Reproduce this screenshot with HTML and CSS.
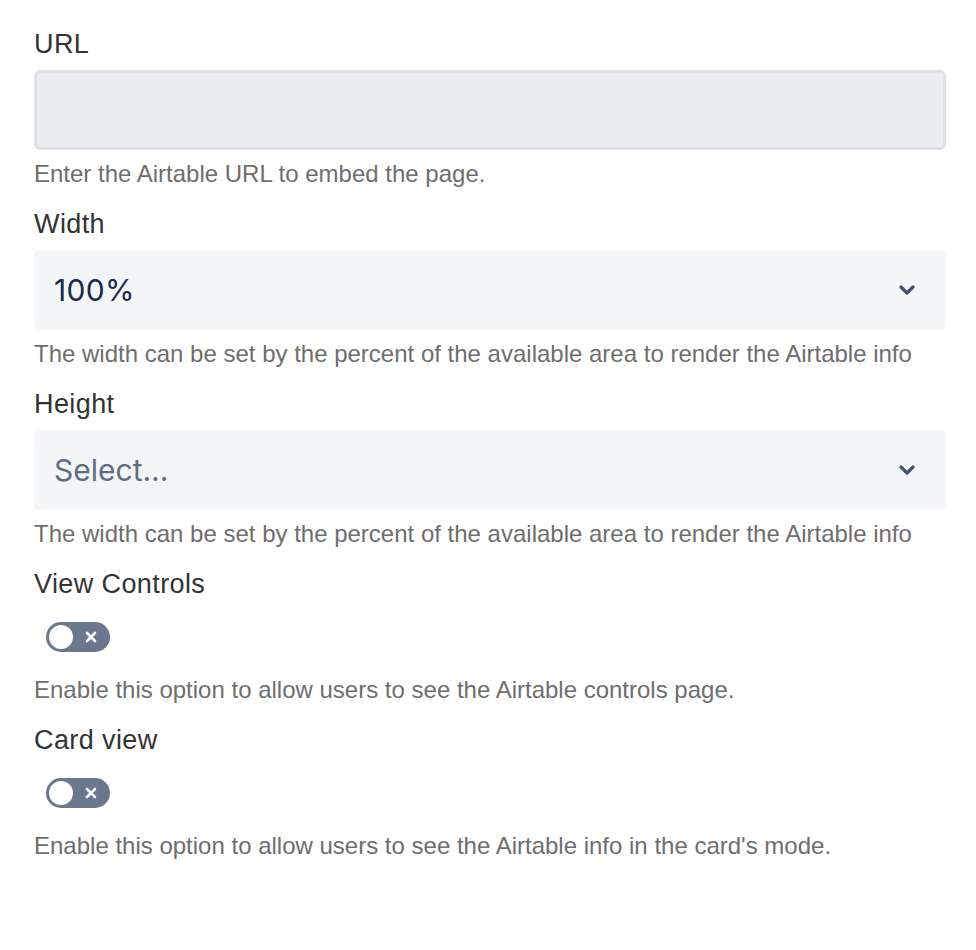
FILE: index.html
```html
<!DOCTYPE html>
<html lang="en">
<head>
    <meta charset="UTF-8">
    <meta name="viewport" content="width=device-width, initial-scale=1.0">
    <title>Airtable embed settings</title>
    <link rel="stylesheet" href="styles.css">
</head>
<body>
    <form class="settings">
        <div class="field">
            <label class="field-label" for="url">URL</label>
            <input class="text-input" type="text" id="url">
            <p class="help">Enter the Airtable URL to embed the page.</p>
        </div>

        <div class="field">
            <div class="field-label">Width</div>
            <div class="select">
                <span class="select-value">100%</span>
                <svg class="chevron" width="18" height="12" viewBox="0 0 18 12">
                    <path d="M3 3 L9 9 L15 3" fill="none" stroke="#42526e" stroke-width="3.2" stroke-linecap="round" stroke-linejoin="round"/>
                </svg>
            </div>
            <p class="help">The width can be set by the percent of the available area to render the Airtable info</p>
        </div>

        <div class="field">
            <div class="field-label">Height</div>
            <div class="select">
                <span class="select-value placeholder">Select...</span>
                <svg class="chevron" width="18" height="12" viewBox="0 0 18 12">
                    <path d="M3 3 L9 9 L15 3" fill="none" stroke="#42526e" stroke-width="3.2" stroke-linecap="round" stroke-linejoin="round"/>
                </svg>
            </div>
            <p class="help">The width can be set by the percent of the available area to render the Airtable info</p>
        </div>

        <div class="field">
            <div class="field-label">View Controls</div>
            <div class="toggle-row">
                <span class="toggle">
                    <span class="knob"></span>
                    <svg class="toggle-x" width="14" height="14" viewBox="0 0 14 14">
                        <path d="M3 3 L11 11 M11 3 L3 11" stroke="#fff" stroke-width="2.6" stroke-linecap="round"/>
                    </svg>
                </span>
            </div>
            <p class="help">Enable this option to allow users to see the Airtable controls page.</p>
        </div>

        <div class="field">
            <div class="field-label">Card view</div>
            <div class="toggle-row">
                <span class="toggle">
                    <span class="knob"></span>
                    <svg class="toggle-x" width="14" height="14" viewBox="0 0 14 14">
                        <path d="M3 3 L11 11 M11 3 L3 11" stroke="#fff" stroke-width="2.6" stroke-linecap="round"/>
                    </svg>
                </span>
            </div>
            <p class="help">Enable this option to allow users to see the Airtable info in the card's mode.</p>
        </div>
    </form>
</body>
</html>
```

FILE: styles.css
```css
/* Airtable block settings panel */
body {
    margin: 0;
    background: #fff;
    font-family: 'Liberation Sans', Arial, sans-serif;
    color: #333;
}

.settings {
    width: 912px;
    padding: 28px 0 0 34px;
}

.field {
    margin-bottom: 20px;
}

.field-label {
    display: block;
    font-size: 27px;
    line-height: 32px;
    letter-spacing: 0.4px;
    color: #333;
    margin-bottom: 10px;
}

.help {
    margin: 10px 0 0;
    font-size: 24px;
    line-height: 28px;
    color: #6e6e6e;
}

/* Text input */
.text-input {
    display: block;
    box-sizing: border-box;
    width: 100%;
    height: 80px;
    margin: 0;
    background: #ebecf0;
    border: 3px solid #dfe1e6;
    border-radius: 6px;
    outline: none;
}

/* Select */
.select {
    display: flex;
    align-items: center;
    justify-content: space-between;
    box-sizing: border-box;
    height: 80px;
    padding: 0 30px 0 20px;
    background: #f4f5f7;
    border-radius: 6px;
}

.select-value {
    font-family: Inter, 'Noto Sans', sans-serif;
    font-size: 30px;
    letter-spacing: 0.3px;
    color: #172b4d;
}

.select-value.placeholder {
    color: #5e6c84;
    letter-spacing: 0;
}

.chevron {
    display: block;
}

/* Toggle */
.toggle-row {
    padding: 12px 0 14px 12px;
}

.toggle {
    display: flex;
    align-items: center;
    justify-content: space-between;
    box-sizing: border-box;
    width: 64px;
    height: 30px;
    padding: 0 12px 0 3px;
    background: #6b778c;
    border-radius: 15px;
}

.knob {
    width: 24px;
    height: 24px;
    border-radius: 50%;
    background: #fff;
}

.toggle-x {
    display: block;
}
```
